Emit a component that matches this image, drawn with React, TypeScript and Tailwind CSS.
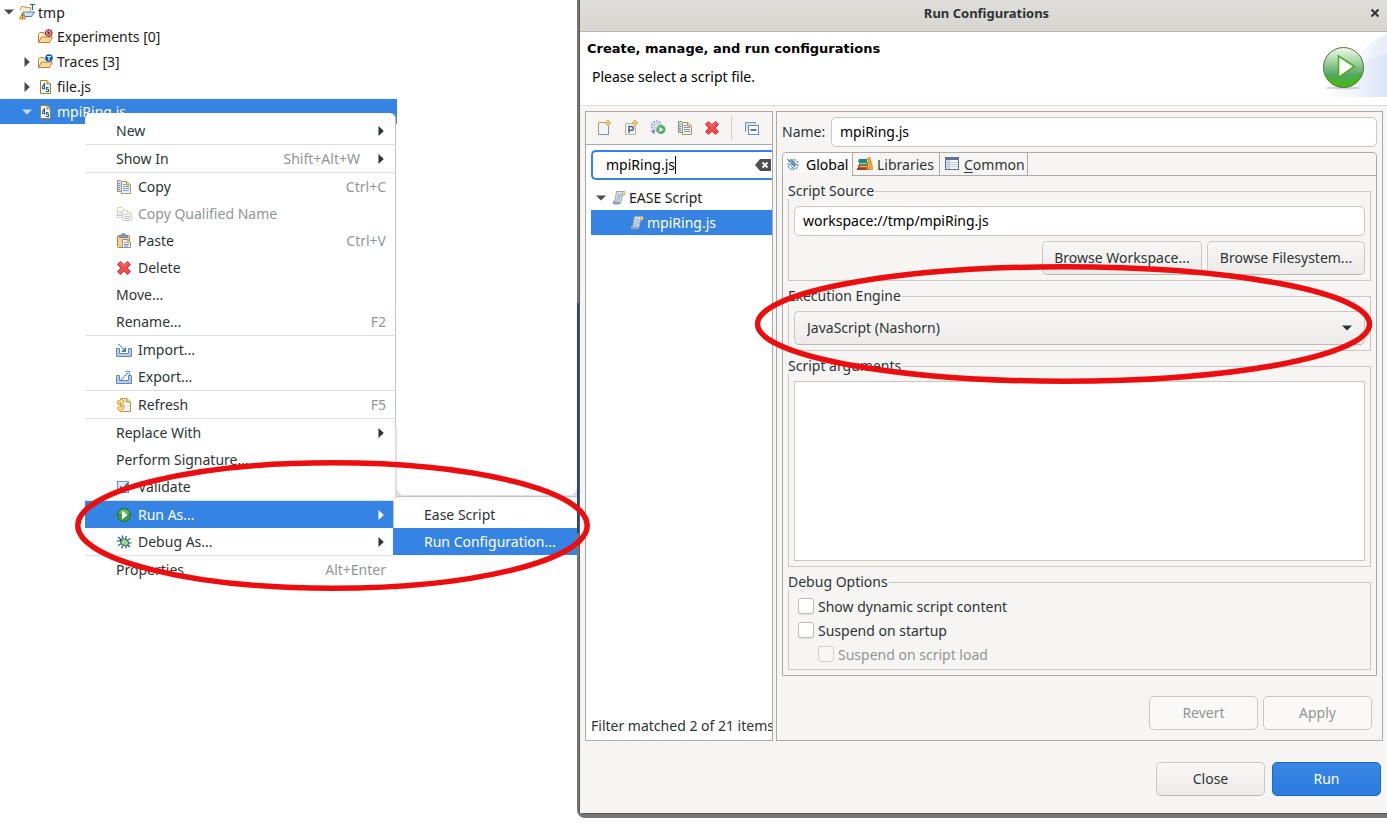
import React from "react";

type IconProps = { children: React.ReactNode; className?: string };

function Icon({ children, className = "" }: IconProps) {
  return (
    <svg viewBox="0 0 16 16" aria-hidden="true" className={`h-4 w-4 shrink-0 ${className}`}>
      {children}
    </svg>
  );
}

const PAGE = "#f3f7fc";

const ProjectIcon = () => (
  <Icon>
    <path d="M1.5 6.5V3.5H2.5V2.500H6V3.500H11.500V7" fill="#fdeec4" stroke="#c9a262" />
    <path d="M3.500 8H15.500L12.500 12.500H6Z" fill="#cfe0fa" stroke="#5574c4" />
    <path d="M11 .5H16M13.500 .5V6" stroke="#1c66b5" strokeWidth="1.2" fill="none" />
    <path d="M3.500 8.500L6.500 15H.5Z" fill="#f5c35a" stroke="#d08a2a" strokeLinejoin="round" />
    <path d="M3.500 10.500V12.500M3.500 13.200V14.200" stroke="#6a4210" />
  </Icon>
);

const FolderIcon = ({ kind }: { kind: "experiment" | "trace" }) => (
  <Icon>
    <path d="M1.500 13V5.500L3 3.500H6.500L7.500 5H12.500V8" fill="#fff1c8" stroke="#b9813a" />
    <path d="M1.500 13.500L4.500 8H15.500L12.500 13.500Z" fill="#fbd994" stroke="#b9813a" strokeLinejoin="round" />
    {kind === "experiment" ? (
      <>
        <circle cx="11.800" cy="4" r="3.400" fill="#fff" stroke="#8c1020" strokeWidth="1" />
        <path d="M9.500 1.700L14 6.300M14 1.700L9.500 6.300M11.800 .5V7.500M8.500 4H15" stroke="#8c1020" strokeWidth=".8" />
      </>
    ) : (
      <>
        <circle cx="12" cy="4" r="3.800" fill="#0a5cc8" />
        <path d="M10 2.500H14M12 2.500V6.500" stroke="#fff" strokeWidth="1.200" />
      </>
    )}
  </Icon>
);

const JsFileIcon = () => (
  <Icon>
    <path d="M3.500 1.500H10L13.500 5V14.500H3.500Z" fill={PAGE} stroke="#a98228" />
    <path d="M10 1.500V5H13.500" fill="#f3d98c" stroke="#a98228" />
    <path d="M7.500 4V10.500M7.500 4.500L5.500 8V9.500H7.500" fill="none" stroke="#2b5f98" strokeWidth="1.100" />
    <path d="M11.500 8.500H9.500V10.300H11.500V12.500H8.800" fill="none" stroke="#2b5f98" strokeWidth="1.100" />
  </Icon>
);

const CopyIcon = () => (
  <Icon>
    <path d="M5 1.500H1.500V12.500H5" fill="#cfdff0" stroke="#9c8f62" />
    <path d="M2 4.500H4M2 6.500H4M2 8.500H4M2 10.500H4" stroke="#7f9fc6" />
    <path d="M5.500 2.500H11L14.500 6V14.500H5.500Z" fill={PAGE} stroke="#ab9560" />
    <path d="M10.500 2.500V6H14.500" fill="#f0cf7a" stroke="#b9923f" />
    <path d="M7 5.500H9.500M7 7.500H13M7 9.500H13M7 11.500H13" stroke="#7397c6" />
  </Icon>
);

const CopyQualifiedIcon = () => (
  <Icon className="opacity-50">
    <path d="M1.500 1.500H6L8.500 4V11.500H1.500Z" fill="#fffaf0" stroke="#c5a657" />
    <path d="M2.500 5.500H7M2.500 7.500H7M0 9.500H7" stroke="#7c9cc9" />
    <path d="M6.500 4.500H12L15.500 8V14.500H6.500Z" fill={PAGE} stroke="#b4a583" />
    <path d="M11.500 4.500V8H15.500" fill="#f3d98c" stroke="#c5a657" />
    <path d="M8 8.500H10.500M8 10.500H14M8 12.500H14" stroke="#6c8fc0" />
  </Icon>
);

const PasteIcon = () => (
  <Icon>
    <rect x="1.500" y="2.500" width="12" height="12" rx="1" fill="#f8cf93" stroke="#b57f36" />
    <path d="M3.500 4.500V2.500H5.500L6 .8H9L9.500 2.500H11.500V4.500Z" fill="#8c9bb8" stroke="#67779a" strokeWidth=".8" />
    <path d="M6.500 6.500H11.500L14.500 9V14.500H6.500Z" fill={PAGE} stroke="#8a95a8" />
    <path d="M11 6.500V9.500H14.500" fill="#f3d98c" stroke="#b9923f" strokeWidth=".8" />
    <path d="M8 9.500H10M8 11.500H13M8 13H12" stroke="#7397c6" />
  </Icon>
);

const DeleteIcon = () => (
  <Icon>
    <path
      d="M4.300 1.500L8 4.600L11.700 1.500L14.500 4.300L11.200 8L14.500 11.700L11.700 14.500L8 11.200L4.300 14.500L1.500 11.700L4.800 8L1.500 4.300Z"
      fill="#ee4d4d"
      stroke="#d2353b"
      strokeLinejoin="round"
    />
    <path d="M4.300 3L8 6.200L11.700 3" stroke="#f58a86" fill="none" />
  </Icon>
);

const TransferIcon = ({ out }: { out?: boolean }) => (
  <Icon>
    <path d="M.5 6.500H3.500V11.500H12.500V6.500H15.500V14.500H.5Z" fill="#b9cdea" stroke="#6486bd" />
    {out ? (
      <path d="M5 11L12 3.500M9.500 2.500H13.500V6.500" fill="none" stroke="#3f8ab8" strokeWidth="1.200" strokeDasharray="2 .6" />
    ) : (
      <>
        <path d="M2.500 2L9 8.500" fill="none" stroke="#3f9ac8" strokeWidth="1.300" strokeDasharray="2 .6" />
        <path d="M10 5V10H5Z" fill="#3f7fa8" />
      </>
    )}
  </Icon>
);

const RefreshIcon = () => (
  <Icon>
    <path d="M5.500 1.500H11L14.500 5V14.500H5.500" fill="#eef3fb" stroke="#b4964e" />
    <path d="M10.500 1.500V5H14.500" fill="#f0cf7a" stroke="#b9923f" />
    <path d="M1 6.500Q1 3 4.500 3V1L8.500 4.500L4.500 8V6Q3 6 3 8Z" fill="#fbdc8c" stroke="#d39324" strokeWidth=".9" />
    <path d="M8 8.500Q8.500 13 5 13V15L1 11.500L5 8V10Q6.500 10 6.500 8Z" fill="#fbdc8c" stroke="#d39324" strokeWidth=".9" />
  </Icon>
);

const ValidateIcon = () => (
  <Icon>
    <rect x="1.500" y="2.500" width="11" height="11" fill="#dfeaf6" stroke="#6f8fb5" />
    <path d="M4 7.500L6.500 10.500L12 4" fill="none" stroke="#2c4f80" strokeWidth="1.500" />
  </Icon>
);

const RunIcon = () => (
  <Icon>
    <circle cx="8" cy="8" r="6.700" fill="#3f9a45" stroke="#1f7330" />
    <path d="M3 6Q4 2.500 8 2.500T13 6Q8 9 3 6Z" fill="#7cc47a" opacity=".7" />
    <path d="M6 3.500V12.500L11.500 8Z" fill="#fff" />
  </Icon>
);

const BugIcon = () => (
  <Icon>
    <path
      d="M2 3L5 5.500M6 1.500L7 4.500M10.500 2L9.500 5M14.500 4.500L11 6.500M.5 7H4.500M11.500 9H15.500M2 11.500L5.500 9.500M5.500 14.500L7 11.500M10 14.500V11.500M14 13L11 10.500"
      stroke="#24635c"
      strokeWidth="1.200"
    />
    <ellipse cx="8.500" cy="8.300" rx="4.300" ry="3.100" transform="rotate(28 8.500 8.300)" fill="#a8d49a" stroke="#1d6a5c" />
    <circle cx="5" cy="6" r="1.500" fill="#2b6e66" />
  </Icon>
);

const Spark = () => (
  <>
    <path d="M12 0L13.300 1.700L15 3L13.300 4.300L12 6L10.700 4.300L9 3L10.700 1.700Z" fill="#fff3c4" stroke="#d6a63c" strokeWidth=".9" />
    <path d="M12 0V6M9 3H15" stroke="#d6a63c" strokeWidth=".8" />
  </>
);

const NewConfigIcon = () => (
  <Icon>
    <path d="M2.500 2.500H12.500V14.500H2.500Z" fill="#eff5fc" stroke="#b89c5b" />
    <path d="M12.500 7V14.500H3" fill="none" stroke="#7f90aa" />
    <Spark />
  </Icon>
);

const PrototypeIcon = () => (
  <Icon>
    <path d="M2.500 3.500H12.500V14.500H2.500Z" fill="#f1f1ef" stroke="#b8b5a8" />
    <path d="M6 13V6.500H8.500Q10.500 6.500 10.500 8.300T8.500 10.200H6" fill="none" stroke="#5c6672" strokeWidth="1.500" />
    <Spark />
  </Icon>
);

const ExportConfigIcon = () => (
  <Icon>
    <circle cx="6.500" cy="6" r="5" fill="#d2dcec" stroke="#9aa9c4" strokeDasharray="2 1.200" strokeWidth="1.400" />
    <circle cx="6.500" cy="6" r="2" fill="#f6f5f4" stroke="#b4c0d6" />
    <path d="M.5 10.500H4.500V14.500Z" fill="#5b7fb8" />
    <circle cx="11" cy="9.500" r="4.500" fill="#54b066" />
    <path d="M9.500 7V12L13.500 9.500Z" fill="#fff" />
  </Icon>
);

const CollapseIcon = () => (
  <Icon>
    <path d="M2 11.500H1.500V2.500H11.500V4" fill="#cfe1f5" stroke="#6f97c2" />
    <rect x="4.500" y="5.500" width="10" height="9" fill="#fff" stroke="#5f8fc0" />
    <path d="M6.500 10H12.500" stroke="#1c4f86" strokeWidth="1.500" />
  </Icon>
);

const ScriptIcon = () => (
  <Icon>
    <path d="M5.500 1.500H13.500V5H11.500L9.500 13.500H2.500V11H4Z" fill="#dfe9f5" stroke="#a9a58a" />
    <path d="M13.500 1.500Q15 3 13.500 5H11.500V2Z" fill="#f5e4a2" stroke="#b8a860" strokeWidth=".8" />
    <path d="M6.500 4H10.500M6 6H10.500M5.500 8H10M5 10H9" stroke="#7d9cc4" strokeWidth=".9" />
    <path d="M2 11.500H8Q9 13 9.500 13.500L8 14.500H2Z" fill="#8a9fc2" />
  </Icon>
);

const GlobalIcon = () => (
  <Icon>
    <circle cx="8" cy="7.500" r="5" fill="#eef6fc" stroke="#5b9bc4" strokeWidth="1.300" strokeDasharray="2 1" />
    <path d="M8 3.500L5 7.500L8 11.500L11 7.500ZM4 7.500H12M8 3.500V11.500" fill="none" stroke="#5289b0" strokeWidth=".7" />
    <path d="M2 2L10 9M5 2.500L10.500 7" stroke="#243f55" strokeWidth=".8" />
  </Icon>
);

const LibrariesIcon = () => (
  <Icon>
    <path d="M2 3H10V6H1Z" fill="#1b7f96" />
    <path d="M2 6H11V9H2Z" fill="#2a9d62" />
    <path d="M1 9H11V12H1Z" fill="#c8502a" />
    <path d="M0 12H12V14H0Z" fill="#994622" />
    <path d="M3 7.500H10M3 10.500H10" stroke="#f2d7a4" strokeWidth=".7" />
    <path d="M10.500 2L13 1.500L16 13L13 14Z" fill="#f5a81c" stroke="#c97a12" strokeWidth=".6" />
    <path d="M11 9L12 13L9 14Z" fill="#e28a20" />
  </Icon>
);

const CommonIcon = () => (
  <Icon>
    <rect x="1.500" y="1.500" width="13" height="12" fill="#f7f9fd" stroke="#5c6f98" />
    <path d="M2 3H14" stroke="#5c73a4" strokeWidth="2" />
    <path d="M2 4H5V13H2Z" fill="#d3dcee" />
    <path d="M5.500 4V13M2 6.500H14M2 8.500H14M2 10.500H14" stroke="#b6c2da" strokeWidth=".8" />
  </Icon>
);

const ClearIcon = () => (
  <svg viewBox="0 0 16 14" aria-hidden="true" className="h-[14px] w-4">
    <path d="M5 1H16V13H5L0 7Z" fill="#4b5052" />
    <path d="M7.500 4.500L12.500 9.500M12.500 4.500L7.500 9.500" stroke="#fff" strokeWidth="1.800" />
  </svg>
);

const BannerIcon = () => (
  <svg viewBox="0 0 66 64" aria-hidden="true" className="h-16 w-[66px] shrink-0">
    <defs>
      <linearGradient id="sweep" gradientUnits="userSpaceOnUse" x1="0" x2="66" y1="0" y2="0">
        <stop offset="0" stopColor="#fff" />
        <stop offset=".5" stopColor="#f1f4fc" />
        <stop offset="1" stopColor="#dbe3f6" />
      </linearGradient>
      <linearGradient id="ball" x1="0" y1="0" x2="0" y2="1">
        <stop offset="0" stopColor="#f2fbee" />
        <stop offset=".35" stopColor="#a4d4a4" />
        <stop offset=".7" stopColor="#4fa660" />
        <stop offset="1" stopColor="#4db41c" />
      </linearGradient>
    </defs>
    <path d="M66 0Q52 6 40 20Q20 50 0 64H66Z" fill="url(#sweep)" opacity=".5" />
    <path d="M66 2Q52 10 42 30L30 64H66Z" fill="url(#sweep)" opacity=".4" />
    <path d="M66 21Q52 24 40 32Q18 58 0 64H66Z" fill="url(#sweep)" />
    <ellipse cx="22" cy="55" rx="18" ry="1.500" fill="#9d94b4" opacity=".4" />
    <circle cx="22.500" cy="34.500" r="20" fill="url(#ball)" stroke="#56703a" />
    <path d="M4 40Q22 58 41 38Q38 53 22.500 53.500T4 40Z" fill="#45b81a" opacity=".65" />
    <path d="M17.500 23V44.500L33.500 33.500Z" fill="#fff" stroke="#4fa828" strokeWidth="1.600" />
  </svg>
);

const Down = ({ className }: { className: string }) => (
  <svg viewBox="0 0 10 6" aria-hidden="true" className={`h-[6px] w-[10px] shrink-0 ${className}`}>
    <path d="M0 .5H10L5 5.500Z" fill="currentColor" />
  </svg>
);

const Right = ({ className = "" }: { className?: string }) => (
  <svg viewBox="0 0 6 10" aria-hidden="true" className={`h-[10px] w-[6px] shrink-0 ${className}`}>
    <path d="M.5 0V10L5.800 5Z" fill="currentColor" />
  </svg>
);

type MenuEntry = {
  label: string;
  icon?: React.ReactNode;
  keys?: string;
  sub?: boolean;
  disabled?: boolean;
  active?: boolean;
};

const menuGroups: MenuEntry[][] = [
  [{ label: "New", sub: true }],
  [{ label: "Show In", keys: "Shift+Alt+W", sub: true }],
  [
    { label: "Copy", icon: <CopyIcon />, keys: "Ctrl+C" },
    { label: "Copy Qualified Name", icon: <CopyQualifiedIcon />, disabled: true },
    { label: "Paste", icon: <PasteIcon />, keys: "Ctrl+V" },
    { label: "Delete", icon: <DeleteIcon /> },
    { label: "Move..." },
    { label: "Rename...", keys: "F2" },
  ],
  [
    { label: "Import...", icon: <TransferIcon /> },
    { label: "Export...", icon: <TransferIcon out /> },
  ],
  [{ label: "Refresh", icon: <RefreshIcon />, keys: "F5" }],
  [
    { label: "Replace With", sub: true },
    { label: "Perform Signature..." },
    { label: "Validate", icon: <ValidateIcon /> },
  ],
  [
    { label: "Run As...", icon: <RunIcon />, sub: true, active: true },
    { label: "Debug As...", icon: <BugIcon />, sub: true },
  ],
  [{ label: "Properties", keys: "Alt+Enter" }],
];

function MenuItem({ entry }: { entry: MenuEntry }) {
  const tone = entry.active ? "bg-[#3584e4] text-white" : entry.disabled ? "text-[#929595]" : "text-[#2e3436]";
  return (
    <button
      type="button"
      role="menuitem"
      disabled={entry.disabled}
      className={`flex h-[27px] w-full items-center gap-[6px] pr-[9px] pl-[31px] text-left ${tone}`}
    >
      {entry.icon}
      <span className="flex-1">{entry.label}</span>
      {entry.keys && <span className={`text-[#929595] ${entry.sub ? "mr-3" : ""}`}>{entry.keys}</span>}
      {entry.sub && <Right className="mr-[2px]" />}
    </button>
  );
}

function ContextMenu() {
  return (
    <div
      role="menu"
      aria-label="Context menu"
      className="absolute top-[113px] left-[85px] w-[311px] rounded-t-md border-r border-[#c4c4c4] bg-white pt-1 pb-2"
    >
      {menuGroups.map((group, i) => (
        <div key={i} className={i > 0 ? "border-t border-[#dfdfdf]" : ""}>
          {group.map((entry) => (
            <MenuItem key={entry.label} entry={entry} />
          ))}
        </div>
      ))}
    </div>
  );
}

function SubMenu() {
  return (
    <div
      role="menu"
      aria-label="Run As"
      className="absolute top-[496px] left-[393px] w-[184px] rounded-tl-md border-t border-[#c4c4c4] bg-white pt-1 pb-8"
    >
      <button type="button" role="menuitem" className="flex h-[27px] w-full items-center border-l border-[#c4c4c4] pl-[30px] text-[#2e3436]">
        Ease Script
      </button>
      <button type="button" role="menuitem" className="flex h-[27px] w-full items-center bg-[#3584e4] pl-[31px] text-white">
        Run Configuration...
      </button>
    </div>
  );
}

function Explorer() {
  return (
    <section className="w-[577px] shrink-0" aria-label="Project explorer">
      <ul className="w-[397px] text-[#1a1a1a]">
        <li className="flex h-6 items-center pl-1">
          <Down className="mr-[5px] text-[#4a4a4a]" />
          <ProjectIcon />
          <span className="ml-[3px]">tmp</span>
        </li>
        <li className="flex h-[25px] items-center pl-[37px]">
          <FolderIcon kind="experiment" />
          <span className="ml-1">Experiments [0]</span>
        </li>
        <li className="flex h-[25px] items-center pl-6">
          <Right className="mr-[7px] text-[#4a4a4a]" />
          <FolderIcon kind="trace" />
          <span className="ml-1">Traces [3]</span>
        </li>
        <li className="flex h-[25px] items-center pl-6">
          <Right className="mr-[7px] text-[#4a4a4a]" />
          <JsFileIcon />
          <span className="ml-1">file.js</span>
        </li>
        <li className="flex h-[25px] items-center bg-[#3584e4] pl-[22px] text-white">
          <Down className="mr-[5px] text-[#c5dbf6]" />
          <JsFileIcon />
          <span className="ml-1">mpiRing.js</span>
        </li>
      </ul>
    </section>
  );
}

const field = "h-[30px] min-w-0 rounded-[5px] border border-[#cdc7c2] bg-white px-2 pb-[2px] text-black outline-none";
const button =
  "h-[34px] rounded-[5px] border border-[#cdc7c2] border-b-[#bfb8b1] bg-linear-to-b from-[#f8f7f6] to-[#edebe9] pb-[2px] text-[#2e3436]";
const disabledButton = "h-[34px] w-[109px] rounded-[5px] border border-[#cdc7c2] bg-[#faf9f8] pb-[2px] text-[#929595]";

function Group({ title, grow, children, className = "" }: { title: string; grow?: boolean; children: React.ReactNode; className?: string }) {
  return (
    <fieldset className={`flex min-w-0 flex-col border border-[#cdc7c2] px-[5px] ${grow ? "flex-1" : ""} ${className}`}>
      <legend className="-ml-[6px] bg-[#f6f5f4] pr-px leading-4">{title}</legend>
      {children}
    </fieldset>
  );
}

function Check({ label, disabled }: { label: string; disabled?: boolean }) {
  return (
    <label className={`flex h-6 items-center gap-1 ${disabled ? "pl-6 text-[#929595]" : "pl-1"}`}>
      <input
        type="checkbox"
        disabled={disabled}
        className="h-4 w-4 appearance-none rounded-[3px] border border-[#c3bcb5] bg-white shadow-[0_1px_1px_#0000001a] disabled:border-[#d5d0cc] disabled:bg-[#f8f7f6] disabled:shadow-none"
      />
      {label}
    </label>
  );
}

function ConfigList() {
  return (
    <div className="flex w-[188px] shrink-0 flex-col overflow-hidden border border-[#aaa] bg-white">
      <div className="flex h-[33px] shrink-0 items-center border-b border-[#aaa] bg-[#f6f5f4] pl-[10px]">
        <button type="button" aria-label="New configuration" className="mr-[11px]"><NewConfigIcon /></button>
        <button type="button" aria-label="New prototype" className="mr-[11px]"><PrototypeIcon /></button>
        <button type="button" aria-label="Export configuration" className="mr-[11px]"><ExportConfigIcon /></button>
        <button type="button" aria-label="Duplicate" className="mr-[11px]"><CopyIcon /></button>
        <button type="button" aria-label="Delete" className="mr-[11px]"><DeleteIcon /></button>
        <span className="mr-3 h-[26px] w-px bg-[#d5d0cc]" />
        <button type="button" aria-label="Collapse all"><CollapseIcon /></button>
      </div>
      <div className="flex flex-1 flex-col pl-[5px]">
        <div className="relative mt-[5px] flex">
          <input
            aria-label="Filter configurations"
            defaultValue="mpiRing.js"
            className="h-[30px] w-full rounded-l-[5px] border-2 border-r-0 border-[#3584e4] bg-white pb-[2px] pl-[13px] text-black outline-none"
          />
          <span className="absolute top-[6px] left-[84px] h-[18px] w-px bg-black" />
          <button type="button" aria-label="Clear filter" className="absolute top-2 right-[1px]"><ClearIcon /></button>
        </div>
        <ul className="mt-[5px] text-[#1a1a1a]">
          <li className="flex h-[25px] items-center pl-[5px]">
            <Down className="mr-[5px] text-[#4a4a4a]" />
            <ScriptIcon />
            <span className="ml-[2px]">EASE Script</span>
          </li>
          <li className="flex h-[25px] items-center bg-[#3584e4] pl-[38px] text-white">
            <ScriptIcon />
            <span className="ml-[2px]">mpiRing.js</span>
          </li>
        </ul>
        <p className="mt-auto pb-1 leading-5 whitespace-nowrap">Filter matched 2 of 21 items</p>
      </div>
    </div>
  );
}

function ConfigForm() {
  return (
    <div className="flex min-w-0 flex-1 flex-col border border-[#aaa] px-[5px] pt-[5px] pb-[10px]">
      <div className="flex items-center">
        <label htmlFor="config-name" className="w-[49px] shrink-0 pb-[2px]">Name:</label>
        <input id="config-name" defaultValue="mpiRing.js" className={`${field} flex-1`} />
      </div>
      <div className="mt-[5px] flex flex-1 flex-col rounded-t-[4px] border border-[#aaa]">
        <div role="tablist" className="flex h-[23px] shrink-0">
          <button type="button" role="tab" aria-selected="true" className="flex w-[70px] items-center gap-[5px] rounded-tl-[4px] border-r border-[#aaa] bg-linear-to-b from-white to-[#f6f5f4] pl-[2px] text-black">
            <GlobalIcon />Global
          </button>
          <button type="button" role="tab" aria-selected="false" className="flex w-[87px] items-center gap-1 border-r border-b border-[#aaa] pl-1">
            <LibrariesIcon />Libraries
          </button>
          <button type="button" role="tab" aria-selected="false" className="flex w-[88px] items-center gap-1 border-r border-b border-[#aaa] pl-1">
            <CommonIcon />
            <span><u className="underline-offset-2">C</u>ommon</span>
          </button>
          <span className="flex-1 border-b border-[#aaa]" />
        </div>
        <div role="tabpanel" className="flex flex-1 flex-col gap-[7px] px-[5px] pt-[7px] pb-[5px]">
          <Group title="Script Source" className="pt-[7px] pb-[5px]">
            <input aria-label="Script source" defaultValue="workspace://tmp/mpiRing.js" className={`${field} w-full`} />
            <div className="mt-[5px] flex justify-end gap-[5px]">
              <button type="button" className={`${button} w-40`}>Browse Workspace...</button>
              <button type="button" className={`${button} w-[158px]`}>Browse Filesystem...</button>
            </div>
          </Group>
          <Group title="Execution Engine" className="pt-[7px] pb-[5px]">
            <div className="relative">
              <select aria-label="Execution engine" className={`${button} block w-full appearance-none pl-3 outline-none`}>
                <option>JavaScript (Nashorn)</option>
              </select>
              <Down className="pointer-events-none absolute top-[14px] right-[13px] text-[#2e3436]" />
            </div>
          </Group>
          <Group title="Script arguments" grow className="pt-[7px] pb-[5px]">
            <textarea aria-label="Script arguments" className="w-full flex-1 resize-none border border-[#cdc7c2] bg-white p-1 outline-none" />
          </Group>
          <Group title="Debug Options" className="pt-1 pb-[3px]">
            <Check label="Show dynamic script content" />
            <Check label="Suspend on startup" />
            <Check label="Suspend on script load" disabled />
          </Group>
        </div>
      </div>
      <div className="mt-5 flex justify-end gap-[5px] pr-[5px]">
        <button type="button" disabled className={disabledButton}>Revert</button>
        <button type="button" disabled className={disabledButton}>Apply</button>
      </div>
    </div>
  );
}

function Dialog() {
  return (
    <section
      role="dialog"
      aria-labelledby="dialog-title"
      className="flex min-w-0 flex-1 overflow-hidden rounded-bl-lg border-b-4 border-[#757575] bg-[#757575]"
    >
      <div className="flex w-[3px] shrink-0 flex-col border-r border-[#5c5c5c]" aria-hidden="true">
        <span className="h-[303px]" />
        <span className="h-[230px] bg-[#1c4a85]" />
      </div>
      <div className="flex min-w-0 flex-1 flex-col border-b border-[#4f4f4f] bg-[#f6f5f4]">
        <header className="flex h-8 shrink-0 items-center border-b border-[#bfb8b1] bg-linear-to-b from-[#e0deda] to-[#d8d5d0] pr-[6px] pb-[5px] pl-6">
          <h1 id="dialog-title" className="flex-1 text-center text-[13px] leading-5 font-bold">Run Configurations</h1>
          <button type="button" aria-label="Close dialog">
            <svg viewBox="0 0 12 12" className="h-3 w-3">
              <path d="M2.500 2.500L9.500 9.500M9.500 2.500L2.500 9.500" stroke="#2e3436" strokeWidth="2" />
            </svg>
          </button>
        </header>
        <div className="flex shrink-0 justify-between border-b border-[#dcdcdc] bg-white pt-px pb-2">
          <div className="pt-[6px] pl-[7px] text-black">
            <h2 className="font-['DejaVu_Sans',sans-serif] text-[13px] leading-5 font-bold">Create, manage, and run configurations</h2>
            <p className="mt-2 pl-[5px] leading-5">Please select a script file.</p>
          </div>
          <BannerIcon />
        </div>
        <div className="flex flex-1 gap-[3px] pt-[5px] pr-1 pl-[5px]">
          <ConfigList />
          <ConfigForm />
        </div>
        <footer className="flex shrink-0 justify-end gap-[7px] pt-[21px] pr-[6px] pb-[17px]">
          <button type="button" className={`${button} w-[109px]`}>Close</button>
          <button type="button" className="h-[34px] w-[109px] rounded-[5px] border border-[#1b6acb] bg-linear-to-b from-[#3987e5] to-[#2a7ce0] pb-[2px] text-white">Run</button>
        </footer>
      </div>
    </section>
  );
}

export default function App() {
  return (
    <main className="relative flex min-h-screen overflow-hidden bg-white pb-[7px] font-['Noto_Sans',sans-serif] text-[14px] text-[#2e3436]">
      <Explorer />
      <ContextMenu />
      <div aria-hidden="true" className="absolute top-[427px] left-[395px] h-[70px] w-[182px] bg-[#e0e0e0] pb-[2px] pl-[2px]">
        <div className="h-full rounded-b-lg bg-white" />
      </div>
      <SubMenu />
      <Dialog />
      <svg aria-hidden="true" viewBox="0 0 515 131" className="pointer-events-none absolute top-[460px] left-[75px] h-[131px] w-[515px]">
        <ellipse cx="257.500" cy="65.500" rx="254.700" ry="62.700" fill="none" stroke="#ec0e0e" strokeWidth="5.500" />
      </svg>
      <svg aria-hidden="true" viewBox="0 0 618 120" className="pointer-events-none absolute top-[264px] left-[755px] h-[120px] w-[618px]">
        <ellipse cx="308.500" cy="60" rx="306" ry="57.200" fill="none" stroke="#ec0e0e" strokeWidth="5.500" />
      </svg>
    </main>
  );
}
